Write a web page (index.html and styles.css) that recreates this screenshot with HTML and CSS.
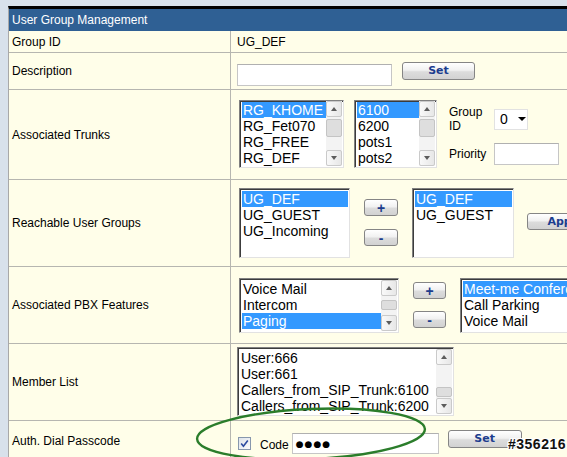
FILE: index.html
```html
<!DOCTYPE html>
<html>
<head>
<meta charset="utf-8">
<title>User Group Management</title>
<link rel="stylesheet" href="styles.css">
</head>
<body>
<div class="page">
  <div class="panel">
    <div class="head">User Group Management</div>

    <div class="row r-id">
      <div class="label">Group ID</div>
      <div class="value v-id">UG_DEF</div>
    </div>

    <div class="row r-desc">
      <div class="label">Description</div>
      <div class="value v-desc">
        <input class="field desc-in" type="text" value="">
        <button class="btn set-desc" type="button">Set</button>
      </div>
    </div>

    <div class="row r-trunk">
      <div class="label">Associated Trunks</div>
      <div class="value v-trunk">
        <div class="lb lb-t1">
          <div class="opts">
            <div class="opt sel">RG_KHOME</div>
            <div class="opt">RG_Fet070</div>
            <div class="opt">RG_FREE</div>
            <div class="opt">RG_DEF</div>
          </div>
          <div class="sb"><span class="arr up"></span><span class="thumb th-t"></span><span class="arr dn"></span></div>
        </div>
        <div class="lb lb-t2">
          <div class="opts">
            <div class="opt sel">6100</div>
            <div class="opt">6200</div>
            <div class="opt">pots1</div>
            <div class="opt">pots2</div>
          </div>
          <div class="sb"><span class="arr up"></span><span class="thumb th-t"></span><span class="arr dn"></span></div>
        </div>
        <div class="side">
          <div class="side-label">Group ID</div>
          <div class="dropdown"><span>0</span><span class="caret"></span></div>
          <div class="side-label prio">Priority</div>
          <input class="field prio-in" type="text" value="">
        </div>
      </div>
    </div>

    <div class="row r-reach">
      <div class="label">Reachable User Groups</div>
      <div class="value v-reach">
        <div class="lb lb-r1">
          <div class="opts">
            <div class="opt sel">UG_DEF</div>
            <div class="opt">UG_GUEST</div>
            <div class="opt">UG_Incoming</div>
          </div>
        </div>
        <div class="pm pm-r">
          <button class="btn small" type="button">+</button>
          <button class="btn small" type="button">-</button>
        </div>
        <div class="lb lb-r2">
          <div class="opts">
            <div class="opt sel">UG_DEF</div>
            <div class="opt">UG_GUEST</div>
          </div>
        </div>
        <button class="btn apply" type="button">Apply</button>
      </div>
    </div>

    <div class="row r-pbx">
      <div class="label">Associated PBX Features</div>
      <div class="value v-pbx">
        <div class="lb lb-p1">
          <div class="opts">
            <div class="opt">Voice Mail</div>
            <div class="opt">Intercom</div>
            <div class="opt sel">Paging</div>
          </div>
          <div class="sb"><span class="arr up"></span><span class="thumb th-p"></span><span class="arr dn"></span></div>
        </div>
        <div class="pm pm-p">
          <button class="btn small" type="button">+</button>
          <button class="btn small" type="button">-</button>
        </div>
        <div class="lb lb-p2">
          <div class="opts">
            <div class="opt sel">Meet-me Conference</div>
            <div class="opt">Call Parking</div>
            <div class="opt">Voice Mail</div>
          </div>
        </div>
      </div>
    </div>

    <div class="row r-member">
      <div class="label">Member List</div>
      <div class="value v-member">
        <div class="lb lb-m">
          <div class="opts">
            <div class="opt">User:666</div>
            <div class="opt">User:661</div>
            <div class="opt">Callers_from_SIP_Trunk:6100</div>
            <div class="opt">Callers_from_SIP_Trunk:6200</div>
          </div>
          <div class="sb"><span class="arr up"></span><span class="thumb th-m"></span><span class="arr dn"></span></div>
        </div>
      </div>
    </div>

    <div class="row r-auth">
      <div class="label">Auth. Dial Passcode</div>
      <div class="value v-auth">
        <span class="check"><svg viewBox="0 0 11 11" width="11" height="11"><path d="M2.2 5.6 L4.4 8.2 L8.8 2.4" fill="none" stroke="#2b4aa0" stroke-width="1.6"/></svg></span>
        <span class="code">Code</span>
        <span class="field pass-in">&#9679;&#9679;&#9679;&#9679;</span>
        <button class="btn set-auth" type="button">Set</button>
      </div>
    </div>
  </div>

  <svg class="ring" width="250" height="70" viewBox="0 0 250 70">
    <ellipse cx="121" cy="34" rx="114" ry="25" transform="rotate(-2.5 121 34)" fill="none" stroke="#2b7d2b" stroke-width="2.4"/>
  </svg>
  <div class="mark">#356216</div>
</div>
</body>
</html>
```

FILE: styles.css
```css
html, body {
  margin: 0;
  padding: 0;
}

body {
  background: #d8e1eb;
  overflow: hidden;
  width: 567px;
  height: 457px;
  font-family: "Liberation Sans", Arial, sans-serif;
  font-size: 12px;
  color: #000;
}

.page {
  position: relative;
  padding: 6px 0 0 8px;
}

.panel {
  width: 640px;
  border-top: 3px solid #000;
  border-left: 1px solid #a8a8a8;
  background: #fffee9;
}

.head {
  height: 22px;
  box-sizing: border-box;
  background: #2f6094;
  color: #fff;
  padding-left: 3px;
  display: flex;
  align-items: center;
  font-size: 12px;
}

.row {
  display: flex;
  box-sizing: border-box;
  border-bottom: 1px solid #b6b6b0;
}

.r-id { height: 22px; }
.r-desc { height: 37px; }
.r-trunk { height: 90px; }
.r-reach { height: 87px; }
.r-pbx { height: 77px; }
.r-member { height: 77px; }
.r-auth { height: 40px; border-bottom: 0; }

.label {
  width: 222px;
  flex: none;
  box-sizing: border-box;
  border-right: 1px solid #b6b6b0;
  padding-left: 3px;
  display: flex;
  align-items: center;
}

.value {
  flex: 1;
  display: flex;
  align-items: flex-start;
  box-sizing: border-box;
}

.v-id {
  align-items: center;
  padding-left: 6px;
}

/* form fields */
.field {
  box-sizing: border-box;
  margin: 0;
  background: #fff;
  border: 1px solid #c6c6c6;
  border-top-color: #b0b0b0;
  font-family: "Liberation Sans", Arial, sans-serif;
  font-size: 13px;
  outline: none;
  padding: 0 3px;
}

.btn {
  box-sizing: border-box;
  margin: 0;
  padding: 0;
  height: 18px;
  border: 1px solid #858585;
  border-radius: 3px;
  background: linear-gradient(#ffffff 0%, #f1f1f1 45%, #dcdcdc 55%, #d2d2d2 100%);
  color: #1c3d8e;
  font-family: "DejaVu Sans", Verdana, sans-serif;
  font-weight: bold;
  font-size: 11px;
  line-height: 16px;
  text-align: center;
}

.btn.small {
  width: 34px;
  height: 17px;
  font-family: "Liberation Sans", Arial, sans-serif;
  font-size: 14px;
  line-height: 14px;
}

/* description row */
.v-desc { padding-left: 6px; }
.desc-in { width: 155px; height: 22px; margin-top: 11px; }
.set-desc { width: 73px; margin-left: 10px; margin-top: 9px; }

/* list boxes */
.lb {
  display: flex;
  box-sizing: border-box;
  background: #fff;
  border: 1px solid;
  border-color: #808080 #e2e2e2 #e2e2e2 #808080;
  box-shadow: inset 1px 1px 0 #3c3c3c;
  padding: 2px 1px 1px 2px;
  overflow: hidden;
  font-size: 14px;
  line-height: 16px;
  flex: none;
}

.opts {
  flex: 1;
  min-width: 0;
  overflow: hidden;
  white-space: nowrap;
}

.opt {
  height: 16px;
  padding-left: 1px;
}

.opt.sel {
  background: #3399ff;
  color: #fff;
}

.sb {
  width: 16px;
  flex: none;
  display: flex;
  flex-direction: column;
  background: #f3f3f3;
  margin: -1px 0 0 0;
}

.arr {
  height: 16px;
  flex: none;
  box-sizing: border-box;
  border: 1px solid #cacaca;
  border-radius: 2px;
  background: linear-gradient(to right, #f9f9f9, #e7e7e7);
  display: flex;
  align-items: center;
  justify-content: center;
}

.arr::after {
  content: "";
  width: 0;
  height: 0;
  border-left: 3.5px solid transparent;
  border-right: 3.5px solid transparent;
}

.arr.up::after { border-bottom: 4px solid #5c5c5c; }
.arr.dn::after { border-top: 4px solid #5c5c5c; }
.arr.dn { margin-top: auto; }

.thumb {
  flex: none;
  box-sizing: border-box;
  border: 1px solid #c4c4c4;
  border-radius: 2px;
  background: #dedede;
}

.th-t { margin-top: 2px; height: 18px; }
.th-p { margin-top: 4px; height: 10px; }
.th-m { margin-top: 22px; height: 10px; }

/* trunks row */
.v-trunk { padding: 10px 0 0 8px; }
.lb-t1 { width: 105px; height: 68px; padding-top: 1px; }
.lb-t2 { width: 83px; height: 68px; margin-left: 10px; padding-top: 1px; }

.side {
  margin-left: 12px;
  margin-top: 5px;
  display: grid;
  grid-template-columns: 45px auto;
  align-items: center;
  row-gap: 10px;
}

.side-label {
  width: 36px;
  line-height: 14px;
}

.dropdown {
  box-sizing: border-box;
  width: 34px;
  height: 21px;
  background: #fff;
  border: 1px solid #e2e2e2;
  display: flex;
  align-items: center;
  padding-left: 5px;
  font-size: 14px;
}

.caret {
  margin-left: 10px;
  width: 0;
  height: 0;
  border-left: 4px solid transparent;
  border-right: 4px solid transparent;
  border-top: 4px solid #000;
}

.prio-in { width: 65px; height: 22px; }

/* reachable row */
.v-reach { padding: 8px 0 0 8px; }
.lb-r1 { width: 111px; height: 70px; }
.lb-r2 { width: 102px; height: 70px; }

.pm {
  display: flex;
  flex-direction: column;
  margin: 0 14px;
}

.pm-r { padding-top: 11px; gap: 13px; }
.apply { width: 76px; height: 17px; margin-left: 13px; margin-top: 25px; }

/* pbx row */
.v-pbx { padding: 11px 0 0 8px; }
.lb-p1 { width: 160px; height: 55px; }
.lb-p2 { width: 170px; height: 55px; }
.pm-p { padding-top: 4px; gap: 12px; }
.pm-p .btn.small { width: 33px; }

/* member row */
.v-member { padding: 3px 0 0 6px; }
.lb-m { width: 217px; height: 69px; }

/* auth row */
.v-auth { padding-left: 7px; }

.check {
  box-sizing: border-box;
  width: 13px;
  height: 13px;
  margin-top: 16px;
  border: 1px solid #8797ad;
  background: linear-gradient(135deg, #dde3ea, #fbfbfb);
  display: flex;
  align-items: center;
  justify-content: center;
}

.code {
  margin-left: 9px;
  margin-top: 17px;
  line-height: 14px;
}

.pass-in {
  width: 147px;
  height: 21px;
  margin-left: 3px;
  margin-top: 12px;
  display: flex;
  align-items: center;
  font-family: "DejaVu Sans", sans-serif;
  font-size: 9px;
  letter-spacing: 1px;
  padding-left: 3px;
}

.set-auth { width: 74px; margin-left: 9px; margin-top: 9px; }

/* annotation overlays */
.ring {
  position: absolute;
  left: 190px;
  top: 400px;
}

.mark {
  position: absolute;
  left: 508px;
  top: 436px;
  font-family: "Liberation Sans", Arial, sans-serif;
  font-weight: bold;
  font-size: 14px;
  letter-spacing: 0.5px;
  color: #111;
  text-shadow: 1px 0 0 #fff, -1px 0 0 #fff, 0 1px 0 #fff, 0 -1px 0 #fff, 1px 1px 0 #fff, -1px -1px 0 #fff, 1px -1px 0 #fff, -1px 1px 0 #fff;
}
```
